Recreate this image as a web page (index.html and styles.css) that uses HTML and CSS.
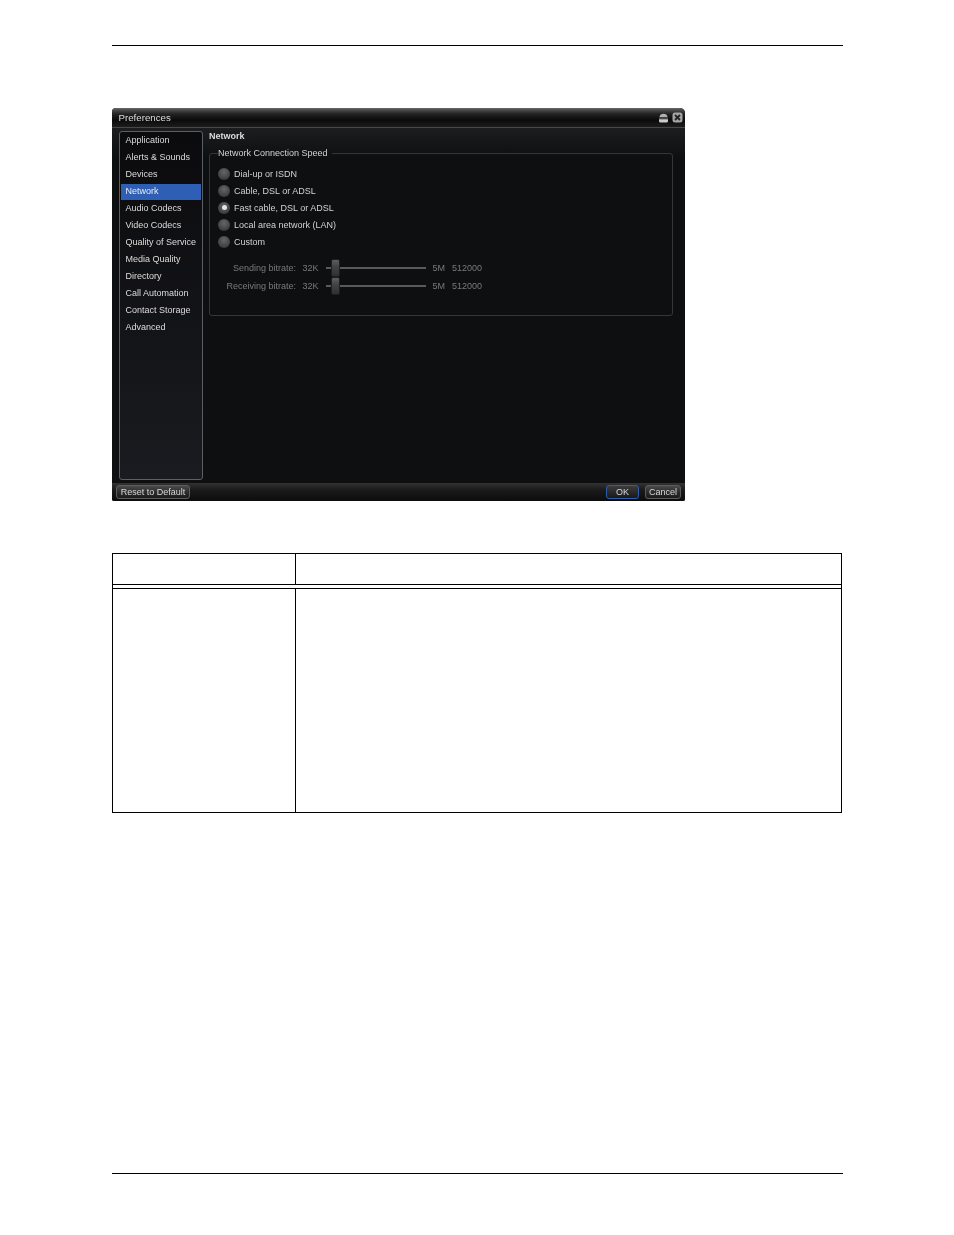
FILE: index.html
```html
<!DOCTYPE html>
<html lang="en">
<head>
<meta charset="utf-8">
<title>Preferences</title>
<link rel="stylesheet" href="styles.css">
</head>
<body>
<div class="page">
  <div class="top-rule"></div>
  <section class="window">
    <header class="titlebar">
      <span class="title">Preferences</span>
      <div class="win-icons">
        <svg class="win-icon" viewBox="0 0 11 11"><path d="M1.500 5C1.500 0.500 9.500 0.500 9.500 5Z" fill="#b0b0b0"/><rect x="1" y="5.500" width="9" height="1.200" fill="#666"/><path d="M1 7.200H10V9Q10 10.500 8.500 10.500H2.500Q1 10.500 1 9Z" fill="#cccccc"/></svg>
        <svg class="win-icon" viewBox="0 0 11 11"><rect x="0.500" y="0.500" width="10" height="10" rx="2.500" fill="#a4a4a4"/><path d="M3 3L8 8M8 3L3 8" stroke="#222" stroke-width="1.800"/></svg>
      </div>
    </header>
    <div class="body">
      <nav class="sidebar">
        <div class="nav-item">Application</div>
        <div class="nav-item">Alerts &amp; Sounds</div>
        <div class="nav-item">Devices</div>
        <div class="nav-item selected">Network</div>
        <div class="nav-item">Audio Codecs</div>
        <div class="nav-item">Video Codecs</div>
        <div class="nav-item">Quality of Service</div>
        <div class="nav-item">Media Quality</div>
        <div class="nav-item">Directory</div>
        <div class="nav-item">Call Automation</div>
        <div class="nav-item">Contact Storage</div>
        <div class="nav-item">Advanced</div>
      </nav>
      <main class="content">
        <h2 class="section-title">Network</h2>
        <fieldset class="group">
          <legend class="group-title">Network Connection Speed</legend>
          <div class="radio-row"><span class="radio"></span>Dial-up or ISDN</div>
          <div class="radio-row"><span class="radio"></span>Cable, DSL or ADSL</div>
          <div class="radio-row"><span class="radio checked"></span>Fast cable, DSL or ADSL</div>
          <div class="radio-row"><span class="radio"></span>Local area network (LAN)</div>
          <div class="radio-row"><span class="radio"></span>Custom</div>
          <div class="sliders">
            <div class="slider-row">
              <span class="slider-label">Sending bitrate:</span><span>32K</span>
              <span class="track"><span class="thumb"></span></span>
              <span>5M</span><span>512000</span>
            </div>
            <div class="slider-row">
              <span class="slider-label">Receiving bitrate:</span><span>32K</span>
              <span class="track"><span class="thumb"></span></span>
              <span>5M</span><span>512000</span>
            </div>
          </div>
        </fieldset>
      </main>
    </div>
    <footer class="footer">
      <button class="btn reset">Reset to Default</button>
      <div class="footer-right">
        <button class="btn ok">OK</button>
        <button class="btn cancel">Cancel</button>
      </div>
    </footer>
  </section>
  <table class="doc-table">
    <thead>
      <tr><th class="col-a"></th><th></th></tr>
    </thead>
    <tbody>
      <tr><td></td><td></td></tr>
    </tbody>
  </table>
  <div class="spacer"></div>
  <div class="bottom-rule"></div>
</div>
</body>
</html>
```
FILE: styles.css
```css
* { box-sizing: border-box; }
html, body { margin: 0; padding: 0; background: #fff; }
body { width: 954px; height: 1235px; overflow: hidden; font-family: "Liberation Sans", Arial, sans-serif; }
.page { padding: 45px 111px 0 112px; height: 1235px; display: flex; flex-direction: column; }
.top-rule, .bottom-rule { height: 1px; background: #000; flex: none; }
.window {
  flex: none; width: 573px; height: 393px; margin-top: 62px;
  display: flex; flex-direction: column;
  background: #0d0e0f; border-radius: 4px 5px 2px 2px;
  color: #d8d8d8; font-size: 9px; filter: blur(0.3px);
}
.titlebar {
  height: 20px; flex: none; padding: 0 2px 0 6.500px;
  display: flex; align-items: center; justify-content: space-between;
  background: linear-gradient(#6a6a6a 0, #4a4a4a 2px, #222 6px, #0b0b0b 12px, #1c1c1c 19px);
  border-bottom: 1px solid #484848; border-radius: 4px 5px 0 0;
}
.title { font-size: 9.700px; color: #dedede; }
.win-icons { display: flex; gap: 3px; }
.win-icon { width: 11px; height: 11px; display: block; }
.body {
  flex: 1; min-height: 0; display: flex; padding: 3px 12px 3px 7px;
  background: linear-gradient(#1c1d1f 0, #0e0f10 30px);
}
.sidebar {
  width: 84px; flex: none; padding: 1px 1px;
  background: linear-gradient(#0b0b0d, #1a1b20);
  border: 1px solid #5c5e63; border-radius: 3px;
}
.nav-item { height: 17px; padding-left: 4.500px; line-height: 15px; color: #dcdcdc; white-space: nowrap; }
.nav-item.selected { background: #2f5fb5; color: #e8ecf5; height: 16px; margin-bottom: 1px; }
.content { flex: 1; min-width: 0; padding-left: 6px; }
.section-title { margin: 0; font-size: 9px; line-height: 10px; font-weight: bold; color: #dcdcdc; }
.group {
  margin: 6px 0 0; padding: 6px 0 0 8px; height: 169px; width: 464px;
  border: 1px solid #34363a; border-radius: 3px; min-width: 0;
}
.group-title { padding: 0 4px 0 0; margin-left: 0; line-height: 12px; color: #d2d2d2; }
.radio-row { height: 17px; display: flex; align-items: center; gap: 4px; color: #d2d2d2; }
.radio {
  width: 12px; height: 12px; border-radius: 50%; flex: none; position: relative;
  background: radial-gradient(circle at 50% 35%, #666, #3f3f3f 70%, #2a2a2a);
}
.radio.checked::after {
  content: ""; position: absolute; left: 3.500px; top: 3.500px; width: 5px; height: 5px;
  border-radius: 50%; background: #e4e4e4;
}
.sliders { margin-top: 9px; color: #7a7a7a; }
.slider-row {
  height: 18px; display: grid; align-items: center;
  grid-template-columns: 79px 17px 100px 13px 30px; column-gap: 6.500px;
  margin-left: -1px;
}
.slider-row span { white-space: nowrap; }
.slider-label { text-align: right; }
.track { height: 2px; background: #5a5a5a; position: relative; display: block; }
.thumb {
  position: absolute; left: 5px; top: -8px; width: 9px; height: 18px; border-radius: 2px;
  background: linear-gradient(#5e5e5e, #444 40%, #303030);
  border: 1px solid #1f1f1f;
}
.footer {
  height: 18px; flex: none; display: flex; align-items: center; justify-content: space-between;
  padding: 0 4px 0 4px;
  background: linear-gradient(#333, #1a1a1a 40%, #0c0c0c);
  border-radius: 0 0 2px 2px;
}
.footer-right { display: flex; gap: 6px; }
.btn {
  height: 14px; padding: 0; font: 9px/12px "Liberation Sans", Arial, sans-serif; color: #d8d8d8;
  background: linear-gradient(#4a4a4a, #2a2a2a 55%, #1c1c1c);
  border: 1px solid #5c5c5c; border-radius: 3px;
}
.reset { width: 74px; }
.ok { width: 33px; border: 1px solid #2f5cae; background: linear-gradient(#3c3c3c, #282828 55%, #1a1a1a); }
.cancel { width: 36px; }
.doc-table {
  flex: none; width: 730px; height: 260px; margin-top: 52px;
  border-collapse: separate; border-spacing: 0; table-layout: fixed;
  border: 1px solid #000;
}
.doc-table .col-a { width: 183px; }
.doc-table th, .doc-table td { padding: 0; }
.doc-table th { height: 31px; border-bottom: 1px solid #000; }
.doc-table td { border-top: 1px solid #000; }
.doc-table tbody::before { content: ""; display: table-row; height: 3px; }
.doc-table th:first-child, .doc-table td:first-child { border-right: 1px solid #000; }
.spacer { flex: none; height: 360px; }
.bottom-rule { width: 731px; }
```
